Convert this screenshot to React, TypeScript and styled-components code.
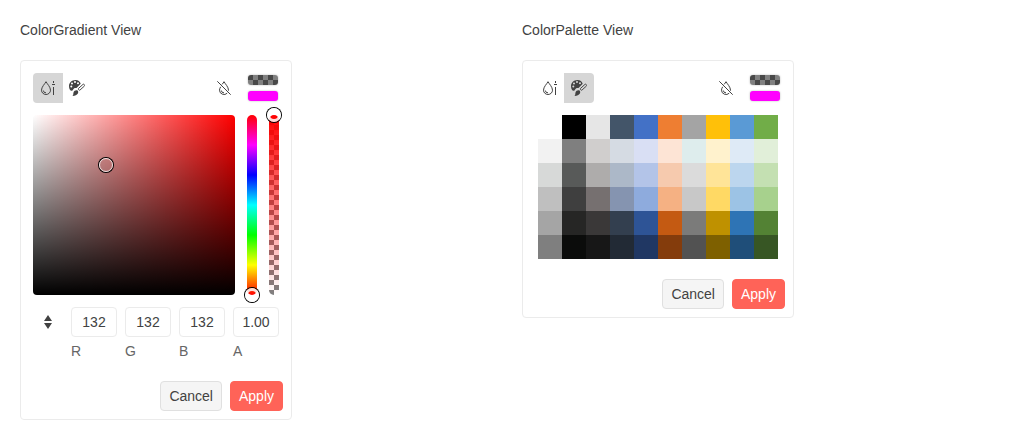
import React from "react";
import styled, { createGlobalStyle, css } from "styled-components";

const GlobalStyle = createGlobalStyle`
  *, *::before, *::after { box-sizing: border-box; }
  body {
    margin: 0;
    background: #fff;
    color: #424242;
    font: 14px/20px "Liberation Sans", Arial, sans-serif;
  }
`;

const checker = css`
  background-image: conic-gradient(#808080 25%, #484848 0 50%, #808080 0 75%, #484848 0);
  background-size: 10px 10px;
`;

const Page = styled.main`
  display: grid;
  grid-template-columns: 502px 1fr;
  align-items: start;
  padding: 20px;
`;

const Title = styled.div`
  margin-bottom: 20px;
`;

const Editor = styled.section`
  width: 272px;
  border: 1px solid #ebebeb;
  border-radius: 4px;
  background: #fff;
`;

const Header = styled.header`
  display: flex;
  align-items: center;
  justify-content: space-between;
  padding: 12px 13px 0 12px;
`;

const Group = styled.div<{ $gap?: number }>`
  display: flex;
  align-items: center;
  gap: ${(p) => p.$gap ?? 0}px;
`;

const IconButton = styled.button<{ $active?: boolean; $side?: "start" | "end" }>`
  display: flex;
  align-items: center;
  justify-content: center;
  width: 30px;
  height: 30px;
  padding: 0;
  border: 0;
  color: #424242;
  background: ${(p) => (p.$active ? "#d6d6d6" : "transparent")};
  border-radius: ${(p) => (p.$side === "end" ? "0 4px 4px 0" : "4px 0 0 4px")};
  margin-left: ${(p) => (p.$side === "end" ? "-1px" : "0")};
`;

const Preview = styled.div`
  display: flex;
  flex-direction: column;
  gap: 6px;
`;

const Swatch = styled.div<{ $color?: string }>`
  width: 30px;
  height: 10px;
  border-radius: 3px;
  box-shadow: 0 0 2px rgba(0, 0, 0, 0.3);
  ${(p) => (p.$color ? `background: ${p.$color};` : checker)}
`;

const Views = styled.div`
  display: flex;
  gap: 12px;
  padding: 12px 12px 0;
`;

const Canvas = styled.div`
  position: relative;
  width: 202px;
  height: 180px;
  border-radius: 4px;
  background: linear-gradient(to top, #000, transparent), linear-gradient(to right, #fff, transparent), #f00;
`;

const Track = styled.div<{ $kind: "hue" | "alpha" }>`
  position: relative;
  width: 10px;
  height: 180px;
  border-radius: 5px;
  ${(p) =>
    p.$kind === "hue"
      ? css`
          background: linear-gradient(to top, #f00, #ff0, #0f0, #0ff, #00f, #f0f, #f00);
        `
      : css`
          background-image: linear-gradient(to top, transparent, #f00),
            conic-gradient(#808080 25%, #fff 0 50%, #808080 0 75%, #fff 0);
          background-size: auto, 10px 10px;
        `}
`;

const Handle = styled.span<{ $x: number; $y: number; $slider?: boolean }>`
  position: absolute;
  left: ${(p) => p.$x - 7}px;
  top: ${(p) => p.$y - 7}px;
  width: 14px;
  height: 14px;
  border-radius: 50%;
  border: ${(p) => (p.$slider ? "3px solid rgba(255,255,255,0.85)" : "1.5px solid rgba(255,255,255,0.8)")};
  box-shadow: 0 0 0 1px #000;
`;

const Inputs = styled.div`
  display: flex;
  gap: 8px;
  padding: 12px 12px 0;
`;

const Field = styled.label`
  display: flex;
  flex-direction: column;
  gap: 4px;
  width: 46px;
  color: #666;
`;

const Value = styled.input`
  width: 100%;
  height: 30px;
  padding: 0;
  border: 1px solid #ebebeb;
  border-radius: 4px;
  text-align: center;
  color: #424242;
  font: inherit;
  outline: 0;
`;

const Palette = styled.div`
  display: grid;
  grid-template-columns: repeat(10, 24px);
  grid-auto-rows: 24px;
  padding: 12px 15px 0;
`;

const Tile = styled.div<{ $color: string }>`
  background: ${(p) => p.$color};
`;

const Footer = styled.footer<{ $top: number }>`
  display: flex;
  justify-content: flex-end;
  gap: 8px;
  padding: ${(p) => p.$top}px 8px 8px;
`;

const Button = styled.button<{ $primary?: boolean }>`
  height: 30px;
  padding: 4px 8px;
  border: 1px solid ${(p) => (p.$primary ? "#ff6358" : "#e0e0e0")};
  border-radius: 4px;
  background: ${(p) => (p.$primary ? "#ff6358" : "#f5f5f5")};
  color: ${(p) => (p.$primary ? "#fff" : "#424242")};
  font: inherit;
`;

const SliderIcon = () => (
  <svg width="16" height="16" viewBox="0 0 16 16" fill="none" stroke="currentColor">
    <path d="M6 1.700C4.800 4 1.500 6.900 1.500 10.200a4.500 4.300 0 0 0 9 0C10.500 6.900 7.200 4 6 1.700Z" />
    <path d="M3.300 10.500A2.600 2.500 0 0 0 6 12.800" />
    <path d="M13.500 1v2M13.500 7v8" />
    <path d="M12 4.500h3" />
  </svg>
);

const PaletteIcon = () => (
  <svg width="16" height="16" viewBox="0 0 16 16" fill="currentColor">
    <path
      fillRule="evenodd"
      d="M6.500 0C2.700 0 0 2.800 0 6c0 2.800 1.200 4.800 2.600 4.800C4.300 10.800 4 8.500 5.700 8c1-.3 1.500.2 2.100-.3L11.700 3.800C11 1.500 9.300 0 6.500 0ZM2.300 5.600a1 1 0 1 0 0 2 1 1 0 0 0 0-2ZM3 2.500a1 1 0 1 0 0 2 1 1 0 0 0 0-2ZM6 1a1 1 0 1 0 0 2 1 1 0 0 0 0-2ZM9 2.200a1 1 0 1 0 0 2 1 1 0 0 0 0-2Z"
    />
    <rect
      x="8.700"
      y="6.100"
      width="7.600"
      height="2.200"
      rx="0.900"
      transform="rotate(-42 12.500 7.200)"
      fill="none"
      stroke="currentColor"
      strokeWidth="0.900"
    />
    <path d="M8.600 10.600c1.500 1.700.5 5.300-5.100 5.300 1.200-.9.600-2.100 1-3.300.6-1.900 2.500-2.800 4.100-2Z" />
  </svg>
);

const ClearIcon = () => (
  <svg width="16" height="16" viewBox="0 0 16 16" fill="none" stroke="currentColor">
    <path d="M1.300 1.300 14.700 14.700" />
    <path d="M6.100 4.400C6.900 3.400 7.600 2.500 8 1.700c1.200 2.200 4.500 5.200 4.500 8.500v.6M11.200 13.200A4.500 4.400 0 0 1 3.500 10.200c0-1.200.5-2.300 1.200-3.400" />
    <path d="M5.300 10.500A2.600 2.500 0 0 0 8 12.800" />
  </svg>
);

const SortIcon = () => (
  <svg width="16" height="16" viewBox="0 0 16 16" fill="currentColor">
    <path d="M8 1 12 7H4ZM8 15 4 9h8Z" />
  </svg>
);

const COLORS = `
ffffff 000000 e6e6e6 435569 4371c6 ee7e32 a4a4a4 ffc009 5a9ad5 71ad48
f2f2f2 7f7f7f d0cecd d5dbe3 d9dff4 fde4d5 deeded fff2cd deeaf6 e1efd9
d7d9d8 585a59 aeacab acb8c8 b3c4e8 f6caae dbdbdb ffe498 bcd6ee c4e0b2
bfbfbf 3f3f3f 767070 8594b0 8eabdd f5b183 c8c8c8 ffd964 9cc3e5 a7d18d
a5a5a5 262625 3a3838 333f4f 2e5496 c45a12 7b7b7a bf9100 2e74b5 538234
7f7f7f 0b0c0b 171717 222a35 203763 843c0c 525252 7e6000 1f4e79 375624
`
  .trim()
  .split(/\s+/)
  .map((hex) => `#${hex}`);

const CHANNELS = [
  ["R", "132"],
  ["G", "132"],
  ["B", "132"],
  ["A", "1.00"],
];

const Toolbar = ({ view }: { view: "gradient" | "palette" }) => (
  <Header>
    <Group>
      <IconButton $active={view === "gradient"} $side="start" aria-label="Gradient">
        <SliderIcon />
      </IconButton>
      <IconButton $active={view === "palette"} $side="end" aria-label="Palette">
        <PaletteIcon />
      </IconButton>
    </Group>
    <Group $gap={9}>
      <IconButton aria-label="Clear">
        <ClearIcon />
      </IconButton>
      <Preview>
        <Swatch />
        <Swatch $color="#f0f" />
      </Preview>
    </Group>
  </Header>
);

const Actions = ({ top }: { top: number }) => (
  <Footer $top={top}>
    <Button>Cancel</Button>
    <Button $primary>Apply</Button>
  </Footer>
);

export default function App() {
  return (
    <Page>
      <GlobalStyle />
      <div>
        <Title>ColorGradient View</Title>
        <Editor>
          <Toolbar view="gradient" />
          <Views>
            <Canvas>
              <Handle $x={73} $y={50} />
            </Canvas>
            <Track $kind="hue">
              <Handle $slider $x={5} $y={180} />
            </Track>
            <Track $kind="alpha">
              <Handle $slider $x={5} $y={0} />
            </Track>
          </Views>
          <Inputs>
            <IconButton aria-label="Toggle inputs">
              <SortIcon />
            </IconButton>
            {CHANNELS.map(([name, value]) => (
              <Field key={name}>
                <Value defaultValue={value} />
                {name}
              </Field>
            ))}
          </Inputs>
          <Actions top={20} />
        </Editor>
      </div>
      <div>
        <Title>ColorPalette View</Title>
        <Editor>
          <Toolbar view="palette" />
          <Palette>
            {COLORS.map((color, i) => (
              <Tile key={i} $color={color} />
            ))}
          </Palette>
          <Actions top={20} />
        </Editor>
      </div>
    </Page>
  );
}
